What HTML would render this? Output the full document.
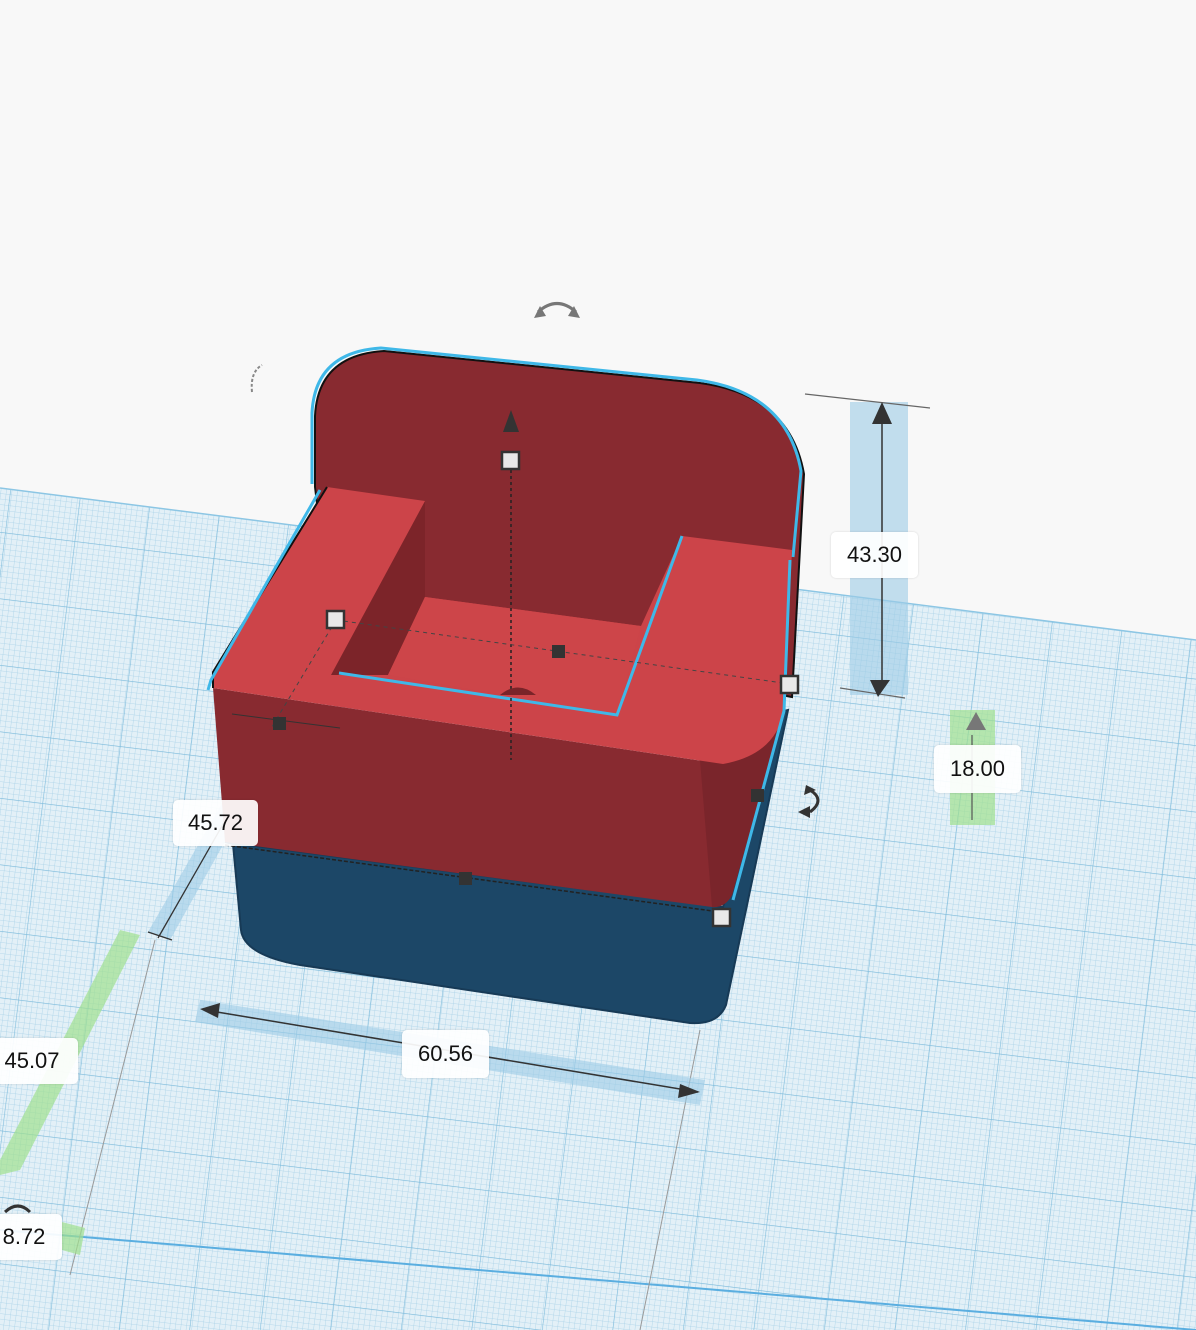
<!DOCTYPE html>
<html><head><meta charset="utf-8"><style>
html,body{margin:0;padding:0;background:#f8f8f8;}
.lbl{position:absolute;background:rgba(255,255,255,0.92);border-radius:5px;font-family:"Liberation Sans",sans-serif;font-size:22px;color:#111;display:flex;align-items:center;justify-content:center;box-shadow:0 0 2px rgba(0,0,0,0.15);}
</style></head><body>
<div style="position:relative;width:1196px;height:1330px;overflow:hidden;">
<svg width="1196" height="1330" viewBox="0 0 1196 1330" style="position:absolute;left:0;top:0">
<defs>
<pattern id="minor" width="5.5" height="5.5" patternUnits="userSpaceOnUse" patternTransform="rotate(7)">
<rect width="5.5" height="5.5" fill="#e3f0f7"/>
<path d="M0 0H5.5M0 0V5.5" stroke="#a9d2e8" stroke-width="0.8"/>
</pattern>
<pattern id="major" width="70" height="66" patternUnits="userSpaceOnUse" patternTransform="rotate(7)">
<path d="M0 0H70M0 0V66" stroke="#7fbcdc" stroke-width="1.2" fill="none"/>
</pattern>
<clipPath id="plane"><polygon points="0,488 1196,640 1196,1330 0,1330"/></clipPath>
</defs>
<g clip-path="url(#plane)">
<rect width="1196" height="1330" fill="url(#minor)"/>
<rect width="1196" height="1330" fill="url(#major)"/>
<path d="M0 1230 L1196 1330" stroke="#5aaee0" stroke-width="2"/>
<path d="M155 940 L70 1275 M700 1030 L640 1330" stroke="#999" stroke-width="1" fill="none"/>
</g>
<path d="M0 488 L1196 640" stroke="#8cc6e4" stroke-width="1.5"/>
<!-- dimension bands -->
<rect x="850" y="402" width="58" height="293" fill="#9ccbe6" opacity="0.6"/>
<path d="M805 394 L930 408 M840 688 L905 698" stroke="#666" stroke-width="1.2"/>
<path d="M882 420 V680" stroke="#333" stroke-width="1.5"/>
<path d="M882 402 L872 424 L892 424Z M870 680 L890 680 L878 697Z" fill="#333"/>
<rect x="950" y="710" width="45" height="115" fill="#9fe08f" opacity="0.7"/>
<path d="M972 735 V820" stroke="#555" stroke-width="1.2"/>
<path d="M976 712 L966 730 L986 730Z" fill="#777"/>
<polygon points="200,1000 705,1080 700,1105 195,1022" fill="#9ccbe6" opacity="0.6"/>
<path d="M205 1010 L698 1092" stroke="#333" stroke-width="1.5"/>
<path d="M200 1009 L220 1003 L218 1018Z M700 1092 L680 1084 L678 1098Z" fill="#333"/>
<polygon points="120,930 140,935 20,1170 0,1175 0,1160" fill="#9fe08f" opacity="0.7"/>
<polygon points="62,1222 85,1228 80,1255 62,1250" fill="#9fe08f" opacity="0.7"/>
<polygon points="270,720 290,725 170,940 148,932" fill="#9ccbe6" opacity="0.6"/>
<path d="M278 728 L158 938" stroke="#333" stroke-width="1.3"/>
<path d="M148 932 L172 940" stroke="#333" stroke-width="1.3"/>
<!-- blue base -->
<path d="M233 844 L241 930 Q244 955 300 965 L690 1023 Q718 1025 726 1005 L788 710 L784 711 L723 907 L225 842Z" fill="#1c4767" stroke="#173a56" stroke-width="2"/>
<!-- backrest -->
<path d="M315 487 L315 416 Q318 355 384 351 L700 383 Q790 395 804 474 L792 697 L330 610Z" fill="#882a30" stroke="#111" stroke-width="2"/>
<path d="M315 487 L315 416 Q318 355 384 351 L700 383 Q790 395 804 474 L796 560" fill="none" stroke="#3fb8e8" stroke-width="3" transform="translate(-3,-3)"/>
<!-- red block front face -->
<path d="M213 688 L225 842 L712 907 Q725 908 732 895 L784 711 Q775 755 723 764 Z" fill="#882a30"/>
<path d="M784 711 L732 895 Q725 908 712 907 L700 760 Q775 755 784 711Z" fill="#7a252b"/>
<!-- top surface -->
<path d="M213 688 L213 672 L327 487 L425 501 L425 597 L641 626 L682 536 L792 550 L784 711 Q775 755 723 764 Z" fill="#cc4449"/>
<path d="M425 501 L425 597 L388 675 L331 675 Z" fill="#7c2429"/>
<path d="M425 597 L641 626 L617 715 L388 675 Z" fill="#cd4549"/>
<path d="M339 673 L617 715 L682 536" fill="none" stroke="#3fb8e8" stroke-width="3"/>
<path d="M213 688 L213 672 L327 487" fill="none" stroke="#111" stroke-width="2"/>
<path d="M208 690 L211 680 L320 490" fill="none" stroke="#3fb8e8" stroke-width="3"/>
<path d="M790 560 L784 711 L733 900" fill="none" stroke="#3fb8e8" stroke-width="3"/>
<path d="M225 845 L720 912" stroke="#222" stroke-width="1.5" stroke-dasharray="4,2"/>
<!-- dashed guides -->
<path d="M511 470 V760" stroke="#222" stroke-width="1.5" stroke-dasharray="3,3"/>
<path d="M336 620 L790 684 M336 620 L270 730" stroke="#444" stroke-width="1" stroke-dasharray="4,4"/>
<path d="M232 714 L340 728" stroke="#333" stroke-width="1"/>
<path d="M503 432 L511 410 L519 432Z" fill="#333"/>
<path d="M500 695 Q518 680 536 695Z" fill="#7a2429"/>
<!-- handles -->
<g fill="#e8e8e8" stroke="#333" stroke-width="2.5">
<rect x="502" y="452" width="17" height="17"/><rect x="327" y="611" width="17" height="17"/>
<rect x="781" y="676" width="17" height="17"/><rect x="713" y="909" width="17" height="17"/>
</g>
<g fill="#333"><rect x="552" y="645" width="13" height="13"/><rect x="273" y="717" width="13" height="13"/><rect x="459" y="872" width="13" height="13"/><rect x="751" y="789" width="13" height="13"/></g>
<!-- rotate icons -->
<path d="M538 312 Q557 295 576 312" fill="none" stroke="#777" stroke-width="3"/>
<path d="M534 318 L540 306 L546 316Z M580 318 L574 306 L568 316Z" fill="#777"/>
<path d="M252 392 Q250 372 262 365" fill="none" stroke="#888" stroke-width="2" stroke-dasharray="3,2"/>
<path d="M810 790 Q826 800 810 812" fill="none" stroke="#333" stroke-width="3"/>
<path d="M798 812 L810 806 L810 818Z M806 785 L816 790 L804 795Z" fill="#333"/>
<path d="M5 1212 Q18 1200 30 1212" fill="none" stroke="#333" stroke-width="3"/>
</svg>
<div class="lbl" style="left:831px;top:532px;width:87px;height:46px;">43.30</div>
<div class="lbl" style="left:934px;top:745px;width:87px;height:48px;">18.00</div>
<div class="lbl" style="left:173px;top:800px;width:85px;height:46px;">45.72</div>
<div class="lbl" style="left:402px;top:1030px;width:87px;height:48px;">60.56</div>
<div class="lbl" style="left:-14px;top:1038px;width:92px;height:46px;">45.07</div>
<div class="lbl" style="left:-14px;top:1214px;width:76px;height:46px;">8.72</div>
</div>
</body></html>
